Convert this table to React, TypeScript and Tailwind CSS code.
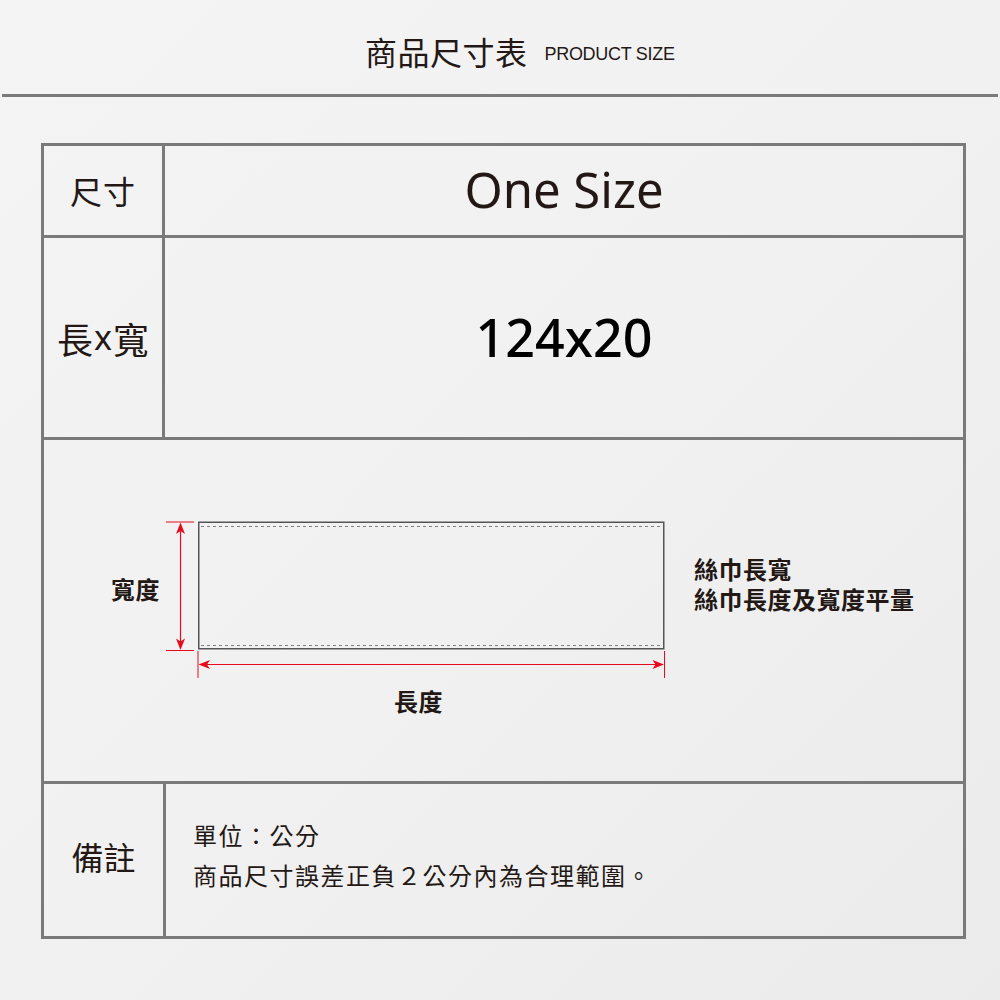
import React from "react";

const CJK = "font-['Noto_Sans_CJK_TC','Noto_Sans_CJK_SC',sans-serif]";

function Diagram() {
  const red = "#e60b1c";
  return (
    <svg
      className="absolute inset-0"
      width={919}
      height={341}
      viewBox="44 440 919 341"
    >
      {/* scarf rectangle */}
      <rect x={198.75} y={522.25} width={465} height={126.5} fill="none" stroke="#555" strokeWidth={1.5} />
      <line x1={201} y1={526.5} x2={662} y2={526.5} stroke="#808080" strokeWidth={1} strokeDasharray="3 3" />
      <line x1={201} y1={645.5} x2={662} y2={645.5} stroke="#808080" strokeWidth={1} strokeDasharray="3 3" />

      {/* vertical dimension */}
      <line x1={166} y1={522} x2={194} y2={522} stroke={red} strokeWidth={1} />
      <line x1={166} y1={650.5} x2={194} y2={650.5} stroke={red} strokeWidth={1} />
      <line x1={180.5} y1={528} x2={180.5} y2={645} stroke={red} strokeWidth={1.2} />
      <polygon points="180.5,522.5 176,534 180.5,531 185,534" fill={red} />
      <polygon points="180.5,650 176,638.5 180.5,641.5 185,638.5" fill={red} />

      {/* horizontal dimension */}
      <line x1={198} y1={651} x2={198} y2={678} stroke={red} strokeWidth={1} />
      <line x1={664.5} y1={651} x2={664.5} y2={678} stroke={red} strokeWidth={1} />
      <line x1={204} y1={664.5} x2={658} y2={664.5} stroke={red} strokeWidth={1.2} />
      <polygon points="198.5,664.5 210,660 207,664.5 210,669" fill={red} />
      <polygon points="664,664.5 652.5,660 655.5,664.5 652.5,669" fill={red} />
    </svg>
  );
}

export default function App() {
  return (
    <div className={`w-[1000px] h-[1000px] bg-gradient-to-br from-[#f4f4f4] via-[#f1f1f1] to-[#ebebeb] text-[#231815] ${CJK}`}>
      {/* header */}
      <div className="h-[94px] flex items-center pl-[365px] pt-[8px]">
        <span className="text-[32px] leading-[40px] tracking-[0.5px]">商品尺寸表</span>
        <span className="ml-[17px] mt-[5px] text-[18px] leading-[20px] font-['Liberation_Sans',Arial,sans-serif] tracking-[-0.3px]">PRODUCT SIZE</span>
      </div>
      <div className="mx-[2px] h-[3px] bg-[#7a7a7a]" />

      {/* table */}
      <div className="mt-[46px] ml-[41px] w-[925px] border-[3px] border-[#7a7a7a]">
        {/* row 1 */}
        <div className="flex h-[92px] border-b-[3px] border-[#7a7a7a]">
          <div className="w-[121px] border-r-[3px] border-[#7a7a7a] flex items-center justify-center text-[32px] tracking-[1px] pb-[1px]">
            尺寸
          </div>
          <div className="flex-1 flex items-center justify-center font-['Noto_Sans',sans-serif] text-[49px] tracking-[0px] text-[#231815] pb-[2px]">
            One Size
          </div>
        </div>

        {/* row 2 */}
        <div className="flex h-[202px] border-b-[3px] border-[#7a7a7a]">
          <div className="w-[121px] border-r-[3px] border-[#7a7a7a] flex items-center justify-center text-[36px]">
            長<span className="font-['Noto_Sans',sans-serif] text-[34px] mx-[1px]">x</span>寬
          </div>
          <div className="flex-1 flex items-center justify-center font-['Noto_Sans',sans-serif] font-medium text-[52px] text-black pb-[2px]">
            124x20
          </div>
        </div>

        {/* row 3 - diagram */}
        <div className="relative h-[344px] border-b-[3px] border-[#7a7a7a]">
          <Diagram />
          <div className="absolute left-[67px] top-[135px] text-[24px] font-bold leading-[28px] tracking-[0.5px]">寬度</div>
          <div className="absolute left-[350px] top-[247px] text-[24px] font-bold leading-[28px] tracking-[0.5px]">長度</div>
          <div className="absolute left-[650px] top-[114px] text-[24px] font-bold leading-[30px] tracking-[0.5px]">
            <div>絲巾長寬</div>
            <div>絲巾長度及寬度平量</div>
          </div>
        </div>

        {/* row 4 */}
        <div className="flex h-[152px]">
          <div className="w-[122px] border-r-[3px] border-[#7a7a7a] flex items-center justify-center text-[32px] pb-[9px]">
            備註
          </div>
          <div className="flex-1 pl-[27px] pt-[31px] text-[24px] leading-[40px] tracking-[1.5px]">
            <div>單位：公分</div>
            <div>商品尺寸誤差正負２公分內為合理範圍。</div>
          </div>
        </div>
      </div>
    </div>
  );
}
